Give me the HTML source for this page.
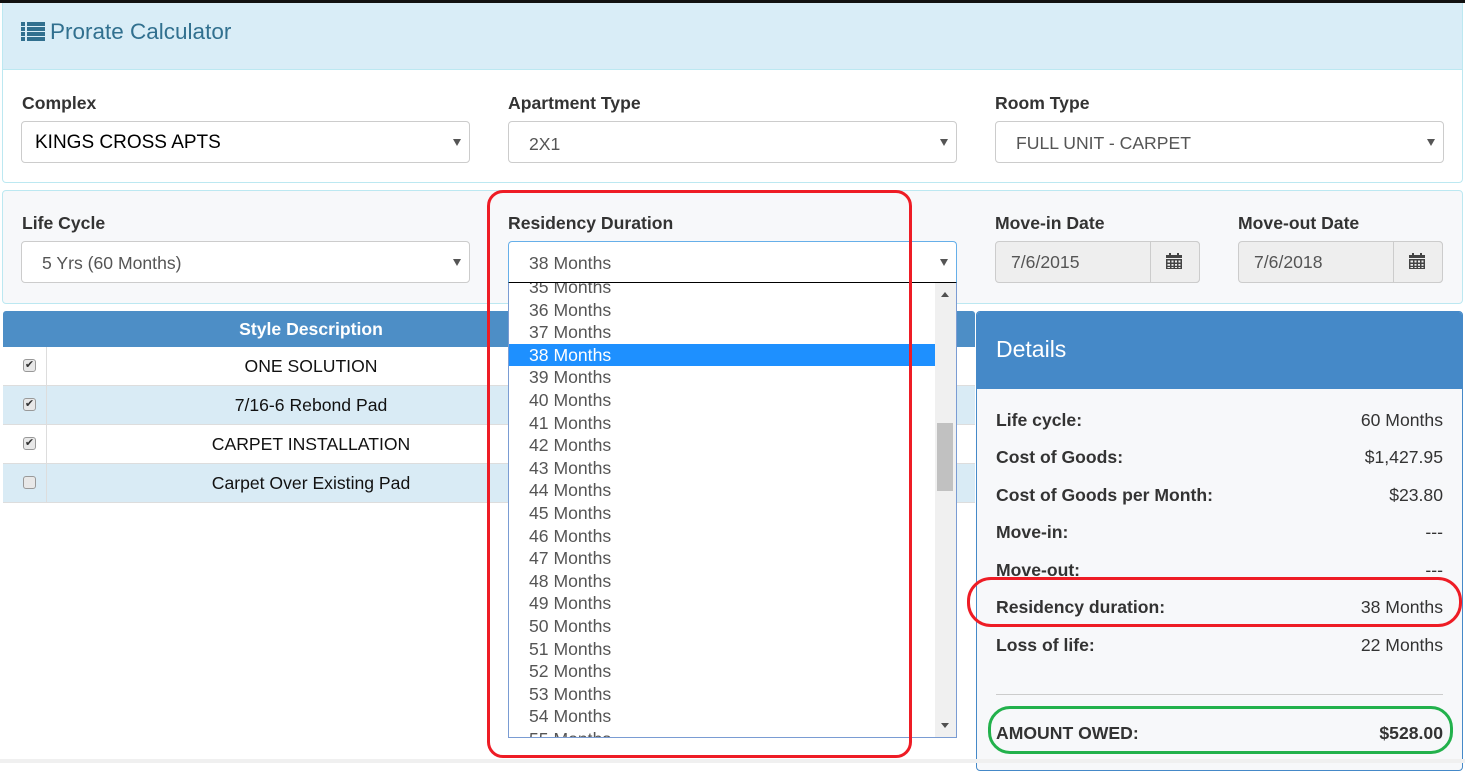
<!DOCTYPE html>
<html><head><meta charset="utf-8"><style>
*{box-sizing:border-box;margin:0;padding:0}
body{width:1465px;height:763px;background:#fff;font-family:"Liberation Sans",Arial,sans-serif;position:relative;overflow:hidden;color:#333}
.a{position:absolute}
.lbl{font-weight:bold;font-size:17.6px;color:#333}
.sel{position:absolute;height:42px;border:1px solid #ccc;border-radius:4px;background:#fff;font-size:17.6px;line-height:42px;padding-left:20px;color:#555}
.sel:after{content:"";position:absolute;right:8px;top:17px;border-left:4px solid transparent;border-right:4px solid transparent;border-top:7px solid #555}
.row{position:absolute;left:3px;width:972px;height:39px;border-bottom:1px solid #ddd;font-size:17.6px;line-height:38px;color:#111}
.row .c{position:absolute;left:0;width:44px;height:38px;border-right:1px solid #ddd}
.row .c i{position:absolute;left:20px;top:12px;width:13px;height:13px;border:1px solid #999;border-radius:3px;background:#e8e8e8;font-style:normal;font-size:11px;line-height:11px;text-align:center;color:#333}
.row .t{position:absolute;left:44px;width:528px;text-align:center}
.dl{position:absolute;left:996px;right:22px;font-size:17.6px;height:22px}
.dl b{position:absolute;left:0}
.dl span{position:absolute;right:0;color:#333}
.it{height:22.6px;line-height:22.6px;padding-left:20px;font-size:17.6px;color:#555}
</style></head><body>
<div class="a" style="left:0;top:0;width:1465px;height:3px;background:#111"></div>
<div class="a" style="left:2px;top:3px;width:1461px;height:180px;border:1px solid #bce8f1;border-top:0;border-radius:0 0 4px 4px"></div>
<div class="a" style="left:3px;top:3px;width:1459px;height:67px;background:#d9edf7;border-bottom:1px solid #bce8f1"></div>
<svg class="a" style="left:21px;top:22px" width="24" height="19" viewBox="0 0 24 19"><g fill="#31708f"><rect x="0" y="0" width="4" height="4"/><rect x="6" y="0" width="18" height="4"/><rect x="0" y="5" width="4" height="4"/><rect x="6" y="5" width="18" height="4"/><rect x="0" y="10" width="4" height="4"/><rect x="6" y="10" width="18" height="4"/><rect x="0" y="15" width="4" height="4"/><rect x="6" y="15" width="18" height="4"/></g></svg>
<div class="a" style="left:50px;top:19px;font-size:22.5px;color:#31708f">Prorate Calculator</div>
<div class="a lbl" style="left:22px;top:93px">Complex</div>
<div class="sel" style="left:21px;top:121px;width:449px;color:#000;font-size:19px;padding-left:13px">KINGS CROSS APTS</div>
<div class="a lbl" style="left:508px;top:93px">Apartment Type</div>
<div class="sel" style="left:508px;top:121px;width:449px;line-height:44px">2X1</div>
<div class="a lbl" style="left:995px;top:93px">Room Type</div>
<div class="sel" style="left:995px;top:121px;width:449px">FULL UNIT - CARPET</div>
<div class="a" style="left:2px;top:190px;width:1461px;height:114px;border:1px solid #bce8f1;border-radius:4px;background:#f7f8fa"></div>
<div class="a lbl" style="left:22px;top:213px">Life Cycle</div>
<div class="sel" style="left:21px;top:241px;width:449px">5 Yrs (60 Months)</div>
<div class="a lbl" style="left:508px;top:213px">Residency Duration</div>
<div class="sel" style="left:508px;top:241px;width:449px;border-color:#66afe9;border-bottom:1px solid #000;border-radius:4px 4px 0 0">38 Months</div>
<div class="a lbl" style="left:995px;top:213px">Move-in Date</div>
<div class="a" style="left:995px;top:241px;width:205px;height:42px;border:1px solid #ccc;border-radius:4px;background:#eee;font-size:17.6px;line-height:40px;padding-left:15px;color:#555">7/6/2015</div>
<div class="a" style="left:1150px;top:241px;width:50px;height:42px;border:1px solid #ccc;border-radius:0 4px 4px 0;background:#eee"></div>
<div class="a lbl" style="left:1238px;top:213px">Move-out Date</div>
<div class="a" style="left:1238px;top:241px;width:205px;height:42px;border:1px solid #ccc;border-radius:4px;background:#eee;font-size:17.6px;line-height:40px;padding-left:15px;color:#555">7/6/2018</div>
<div class="a" style="left:1393px;top:241px;width:50px;height:42px;border:1px solid #ccc;border-radius:0 4px 4px 0;background:#eee"></div>
<svg class="a" style="left:1166px;top:253px" width="16" height="16" viewBox="0 0 16 16"><g fill="#444"><rect x="0" y="2" width="16" height="3"/><rect x="3" y="0" width="2" height="3"/><rect x="11" y="0" width="2" height="3"/><path d="M0 6h16v10H0z M1.5 7.5v2h2.5v-2z M5.5 7.5v2h2v-2z M9 7.5v2h2v-2z M12.5 7.5v2h2v-2z M1.5 11v1.8h2.5V11z M5.5 11v1.8h2V11z M9 11v1.8h2V11z M12.5 11v1.8h2V11z M1.5 14v1h2.5v-1z M5.5 14v1h2v-1z M9 14v1h2v-1z M12.5 14v1h2v-1z" fill-rule="evenodd"/></g></svg>
<svg class="a" style="left:1409px;top:253px" width="16" height="16" viewBox="0 0 16 16"><g fill="#444"><rect x="0" y="2" width="16" height="3"/><rect x="3" y="0" width="2" height="3"/><rect x="11" y="0" width="2" height="3"/><path d="M0 6h16v10H0z M1.5 7.5v2h2.5v-2z M5.5 7.5v2h2v-2z M9 7.5v2h2v-2z M12.5 7.5v2h2v-2z M1.5 11v1.8h2.5V11z M5.5 11v1.8h2V11z M9 11v1.8h2V11z M12.5 11v1.8h2V11z M1.5 14v1h2.5v-1z M5.5 14v1h2v-1z M9 14v1h2v-1z M12.5 14v1h2v-1z" fill-rule="evenodd"/></g></svg>
<div class="a" style="left:3px;top:311px;width:972px;height:36px;background:#4d8ec6;border-radius:3px 3px 0 0"></div>
<div class="a" style="left:47px;top:319px;width:528px;text-align:center;color:#fff;font-weight:bold;font-size:17.6px">Style Description</div>
<div class="row" style="top:347px;background:#fff"><div class="c"><i>✔</i></div><div class="t">ONE SOLUTION</div></div>
<div class="row" style="top:386px;background:#d9ebf5"><div class="c"><i>✔</i></div><div class="t">7/16-6 Rebond Pad</div></div>
<div class="row" style="top:425px;background:#fff"><div class="c"><i>✔</i></div><div class="t">CARPET INSTALLATION</div></div>
<div class="row" style="top:464px;background:#d9ebf5"><div class="c"><i></i></div><div class="t">Carpet Over Existing Pad</div></div>
<div class="a" style="left:976px;top:311px;width:487px;height:460px;border:1px solid #4589c8;border-radius:4px;background:#f7f8fa;overflow:hidden">
<div style="height:77px;background:#4589c8;color:#fff;font-size:23px;line-height:74px;padding-left:19px">Details</div></div>
<div class="dl" style="top:410px"><b>Life cycle:</b><span>60 Months</span></div>
<div class="dl" style="top:447px"><b>Cost of Goods:</b><span>$1,427.95</span></div>
<div class="dl" style="top:485px"><b>Cost of Goods per Month:</b><span>$23.80</span></div>
<div class="dl" style="top:522px"><b>Move-in:</b><span>---</span></div>
<div class="dl" style="top:560px"><b>Move-out:</b><span>---</span></div>
<div class="dl" style="top:597px"><b>Residency duration:</b><span>38 Months</span></div>
<div class="dl" style="top:635px"><b>Loss of life:</b><span>22 Months</span></div>
<div class="a" style="left:996px;top:694px;width:447px;height:1px;background:#ccc"></div>
<div class="dl" style="top:723px"><b>AMOUNT OWED:</b><span style="font-weight:bold">$528.00</span></div>
<div class="a" style="left:0;top:759px;width:1465px;height:4px;background:#f0f0f0"></div>
<div class="a" style="left:508px;top:283px;width:449px;height:455px;border:1px solid #7a9cd3;border-top:0;background:#fff;overflow:hidden">
<div style="position:absolute;left:0;top:-7px;width:427px">
<div class="it">35 Months</div><div class="it">36 Months</div><div class="it">37 Months</div>
<div class="it" style="background:#1e90ff;color:#fff">38 Months</div>
<div class="it">39 Months</div><div class="it">40 Months</div><div class="it">41 Months</div><div class="it">42 Months</div><div class="it">43 Months</div><div class="it">44 Months</div><div class="it">45 Months</div><div class="it">46 Months</div><div class="it">47 Months</div><div class="it">48 Months</div><div class="it">49 Months</div><div class="it">50 Months</div><div class="it">51 Months</div><div class="it">52 Months</div><div class="it">53 Months</div><div class="it">54 Months</div><div class="it">55 Months</div>
</div>
<div style="position:absolute;left:426px;top:0;width:21px;height:455px;background:#f0f0f0">
<div style="position:absolute;left:6px;top:9px;border-left:4px solid transparent;border-right:4px solid transparent;border-bottom:5px solid #505050"></div>
<div style="position:absolute;left:2px;top:140px;width:16px;height:68px;background:#c1c1c1"></div>
<div style="position:absolute;left:6px;top:440px;border-left:4px solid transparent;border-right:4px solid transparent;border-top:5px solid #505050"></div>
</div></div>
<div class="a" style="left:487px;top:190px;width:425px;height:568px;border:3px solid #ee1c25;border-radius:16px"></div>
<div class="a" style="left:967px;top:577px;width:495px;height:50px;border:3px solid #ee1c25;border-radius:24px"></div>
<div class="a" style="left:988px;top:706px;width:465px;height:48px;border:3px solid #22b14c;border-radius:22px"></div>
</body></html>
